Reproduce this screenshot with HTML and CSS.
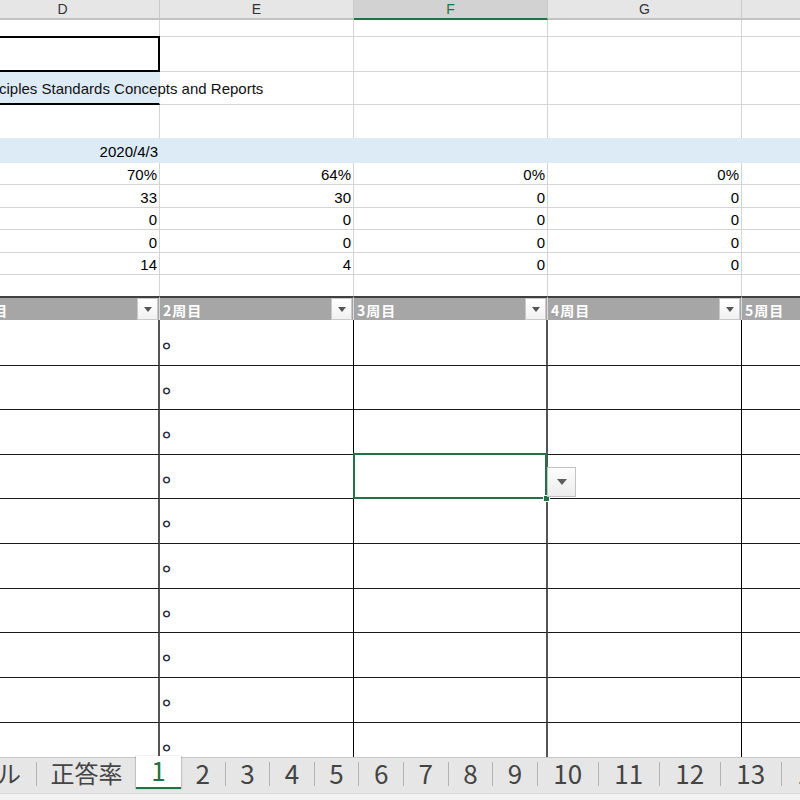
FILE: index.html
```html
<!DOCTYPE html>
<html lang="ja">
<head>
<meta charset="utf-8">
<title>Sheet</title>
<link rel="stylesheet" href="styles.css">
</head>
<body>
<div class="app">
  <div class="sheet">
    <div class="grid">
      <div class="row colhead">
        <div class="ch">D</div><div class="ch">E</div><div class="ch sel">F</div><div class="ch">G</div><div class="ch">H</div>
      </div>
      <div class="row r1"><div class="c"></div><div class="c"></div><div class="c"></div><div class="c"></div><div class="c"></div></div>
      <div class="row r2"><div class="c box"></div><div class="c"></div><div class="c"></div><div class="c"></div><div class="c"></div></div>
      <div class="row r3"><div class="c title"><span class="ttext">ciples Standards Concepts and Reports</span></div><div class="c"></div><div class="c"></div><div class="c"></div><div class="c"></div></div>
      <div class="row r4"><div class="c nob"></div><div class="c nob"></div><div class="c nob"></div><div class="c nob"></div><div class="c nob"></div></div>
      <div class="row r5"><div class="c blue num">2020/4/3</div><div class="c blue"></div><div class="c blue"></div><div class="c blue"></div><div class="c blue"></div></div>
      <div class="row n22"><div class="c num">70%</div><div class="c num">64%</div><div class="c num">0%</div><div class="c num">0%</div><div class="c"></div></div>
      <div class="row n23"><div class="c num">33</div><div class="c num">30</div><div class="c num">0</div><div class="c num">0</div><div class="c"></div></div>
      <div class="row n22"><div class="c num">0</div><div class="c num">0</div><div class="c num">0</div><div class="c num">0</div><div class="c"></div></div>
      <div class="row n23"><div class="c num">0</div><div class="c num">0</div><div class="c num">0</div><div class="c num">0</div><div class="c"></div></div>
      <div class="row n22"><div class="c num">14</div><div class="c num">4</div><div class="c num">0</div><div class="c num">0</div><div class="c"></div></div>
      <div class="row blank"><div class="c nob"></div><div class="c nob"></div><div class="c nob"></div><div class="c nob"></div><div class="c nob"></div></div>
      <div class="row thead">
        <div class="th"><span class="lbl">1周目</span><span class="dd"></span></div>
        <div class="th"><span class="lbl">2周目</span><span class="dd"></span></div>
        <div class="th"><span class="lbl">3周目</span><span class="dd"></span></div>
        <div class="th"><span class="lbl">4周目</span><span class="dd"></span></div>
        <div class="th"><span class="lbl">5周目</span><span class="dd"></span></div>
      </div>
      <div class="row d46"><div class="dc d"></div><div class="dc e"><span class="mark">○</span></div><div class="dc f"></div><div class="dc g"></div><div class="dc h"></div></div>
      <div class="row d44"><div class="dc d"></div><div class="dc e"><span class="mark">○</span></div><div class="dc f"></div><div class="dc g"></div><div class="dc h"></div></div>
      <div class="row d45"><div class="dc d"></div><div class="dc e"><span class="mark">○</span></div><div class="dc f"></div><div class="dc g"></div><div class="dc h"></div></div>
      <div class="row d44"><div class="dc d"></div><div class="dc e"><span class="mark">○</span></div><div class="dc f active"><span class="selbox"></span><span class="handle"></span><span class="vdd"></span></div><div class="dc g"></div><div class="dc h"></div></div>
      <div class="row d45"><div class="dc d"></div><div class="dc e"><span class="mark">○</span></div><div class="dc f"></div><div class="dc g"></div><div class="dc h"></div></div>
      <div class="row d45"><div class="dc d"></div><div class="dc e"><span class="mark">○</span></div><div class="dc f"></div><div class="dc g"></div><div class="dc h"></div></div>
      <div class="row d44"><div class="dc d"></div><div class="dc e"><span class="mark">○</span></div><div class="dc f"></div><div class="dc g"></div><div class="dc h"></div></div>
      <div class="row d45"><div class="dc d"></div><div class="dc e"><span class="mark">○</span></div><div class="dc f"></div><div class="dc g"></div><div class="dc h"></div></div>
      <div class="row d45"><div class="dc d"></div><div class="dc e"><span class="mark">○</span></div><div class="dc f"></div><div class="dc g"></div><div class="dc h"></div></div>
      <div class="row d45"><div class="dc d"></div><div class="dc e"><span class="mark">○</span></div><div class="dc f"></div><div class="dc g"></div><div class="dc h"></div></div>
    </div>
  </div>
  <div class="tabbar">
    <div class="tabs">
      <div class="tab cjk first">ル</div><span class="sep"></span>
      <div class="tab cjk wide">正答率</div>
      <div class="tab active w1">1</div>
      <div class="tab w1">2</div><span class="sep"></span>
      <div class="tab w1">3</div><span class="sep"></span>
      <div class="tab w1">4</div><span class="sep"></span>
      <div class="tab w1">5</div><span class="sep"></span>
      <div class="tab w1">6</div><span class="sep"></span>
      <div class="tab w1">7</div><span class="sep"></span>
      <div class="tab w1">8</div><span class="sep"></span>
      <div class="tab w1">9</div><span class="sep"></span>
      <div class="tab w2">10</div><span class="sep"></span>
      <div class="tab w2">11</div><span class="sep"></span>
      <div class="tab w2">12</div><span class="sep"></span>
      <div class="tab w2">13</div><span class="sep"></span>
      <div class="tab w2">14</div>
    </div>
  </div>
  <div class="status"></div>
</div>
</body>
</html>
```

FILE: styles.css
```css
* { box-sizing: border-box; }
html, body { margin: 0; padding: 0; }
body {
  width: 800px;
  height: 800px;
  overflow: hidden;
  background: #fff;
  font-family: "Liberation Sans", Arial, sans-serif;
  color: #000;
}
.app { display: flex; flex-direction: column; height: 800px; }
.sheet { height: 757px; overflow: hidden; flex: none; }
.grid { margin-left: -34px; width: 970px; }
.row { display: grid; grid-template-columns: repeat(5, 194px); }

/* column letters */
.colhead { height: 20px; }
.ch {
  background: #e6e6e6;
  border-right: 1px solid #cacaca;
  border-bottom: 2px solid #c2c2c2;
  display: flex; align-items: center; justify-content: center;
  font-size: 14px; color: #333;
}
.ch.sel { background: #d2d2d2; color: #217346; border-bottom-color: #217346; }

/* ordinary cells */
.c {
  border-right: 1px solid #d4d4d4;
  border-bottom: 1px solid #d4d4d4;
  display: flex; align-items: center;
  font-size: 15px; white-space: nowrap;
  padding: 0 2px 0 3px;
}
.num { justify-content: flex-end; padding-top: 2px; }
.r1 { height: 17px; }
.r2 { height: 35px; }
.r3 { height: 33px; }
.r4 { height: 33px; }
.r5 { height: 25px; }
.n22 { height: 22px; }
.n23 { height: 23px; }
.blank { height: 21px; }
.nob { border-bottom: none; }
.box { border: 2px solid #000; border-left: none; margin-top: -1px; }
.title {
  background: #ddebf7;
  border-right-color: #ddebf7;
  border-bottom: 2px solid #000;
  overflow: visible;
  padding-left: 33px;
  padding-top: 2px;
}
.ttext { color: #111; }
.blue { background: #ddebf7; border: none; }

/* table header */
.thead { height: 24px; }
.th {
  background: #a6a6a6;
  border-top: 2px solid #404040;
  border-right: 1px solid #dadada;
  display: flex; justify-content: space-between; align-items: stretch;
  padding: 0 1px 0 3px;
  color: #fff; font-weight: bold;
  font-family: "Noto Sans CJK JP", sans-serif;
  font-size: 14px; letter-spacing: 1px;
}
.lbl { align-self: center; padding-top: 2px; line-height: 1; }
.dd {
  width: 21px;
  background: linear-gradient(#ffffff, #f1f1f1);
  border: 1px solid #c9c9c9;
  display: flex; align-items: center; justify-content: center;
}
.dd::after {
  content: "";
  border-left: 4px solid transparent;
  border-right: 4px solid transparent;
  border-top: 5px solid #555;
}

/* data rows */
.d46 { height: 46px; }
.d45 { height: 45px; }
.d44 { height: 44px; }
.dc {
  border-bottom: 1px solid #1a1a1a;
  display: flex; align-items: center;
  padding: 6px 0 0 3px;
}
.dc.d { border-right: 2px solid #555; }
.dc.e { border-right: 1px solid #000; }
.dc.f { border-right: 2px solid #555; }
.dc.g { border-right: 1px solid #000; }
.mark {
  font-family: "DejaVu Sans", sans-serif;
  font-size: 8px;
  color: #2a2a3a;
  -webkit-text-stroke: 0.9px #2a2a3a;
  line-height: 1;
}
.active { position: relative; }
.selbox {
  position: absolute;
  top: -2px; left: -1px; right: -1px; bottom: -1px;
  border: 2px solid #217346;
}
.handle {
  position: absolute;
  right: -4px; bottom: -4px;
  width: 7px; height: 7px;
  background: #217346;
  border: 1px solid #fff;
}
.vdd {
  position: absolute;
  left: calc(100% + 1px); top: 12px;
  width: 29px; height: 30px;
  border: 1px solid #c3c3c3;
  background: linear-gradient(#fdfdfd, #ececec);
  display: flex; align-items: center; justify-content: center;
}
.vdd::after {
  content: "";
  border-left: 5px solid transparent;
  border-right: 5px solid transparent;
  border-top: 6px solid #5f5f5f;
}

/* sheet tabs */
.tabbar {
  height: 36px; flex: none;
  background: #e6e6e6;
  border-top: 1px solid #c8c8c8;
  overflow: visible;
  font-family: "Noto Sans CJK JP", sans-serif;
  color: #444;
}
.tabs { display: flex; height: 35px; margin-left: -18px; white-space: nowrap; }
.tab {
  display: flex; align-items: center; justify-content: center;
  font-size: 26px; line-height: 1;
  padding-bottom: 6px;
  flex: none;
}
.cjk { font-size: 24px; }
.first { width: 54px; }
.wide { width: 99px; }
.w1 { width: 43.6px; }
.w2 { width: 60px; }
.sep { width: 1px; background: #b3b3b3; margin: 4px 0 7px; flex: none; }
.tab.active {
  width: 45px;
  background: #fff;
  color: #217346;
  margin-top: -2px;
  padding-bottom: 4px;
  border-bottom: 2px solid #217346;
  height: 33px;
  box-shadow: 1px 0 1px rgba(0,0,0,0.15), -1px 0 1px rgba(0,0,0,0.15);
}
.status { flex: 1; background: #f3f3f3; border-top: 1px solid #dadada; }
```
